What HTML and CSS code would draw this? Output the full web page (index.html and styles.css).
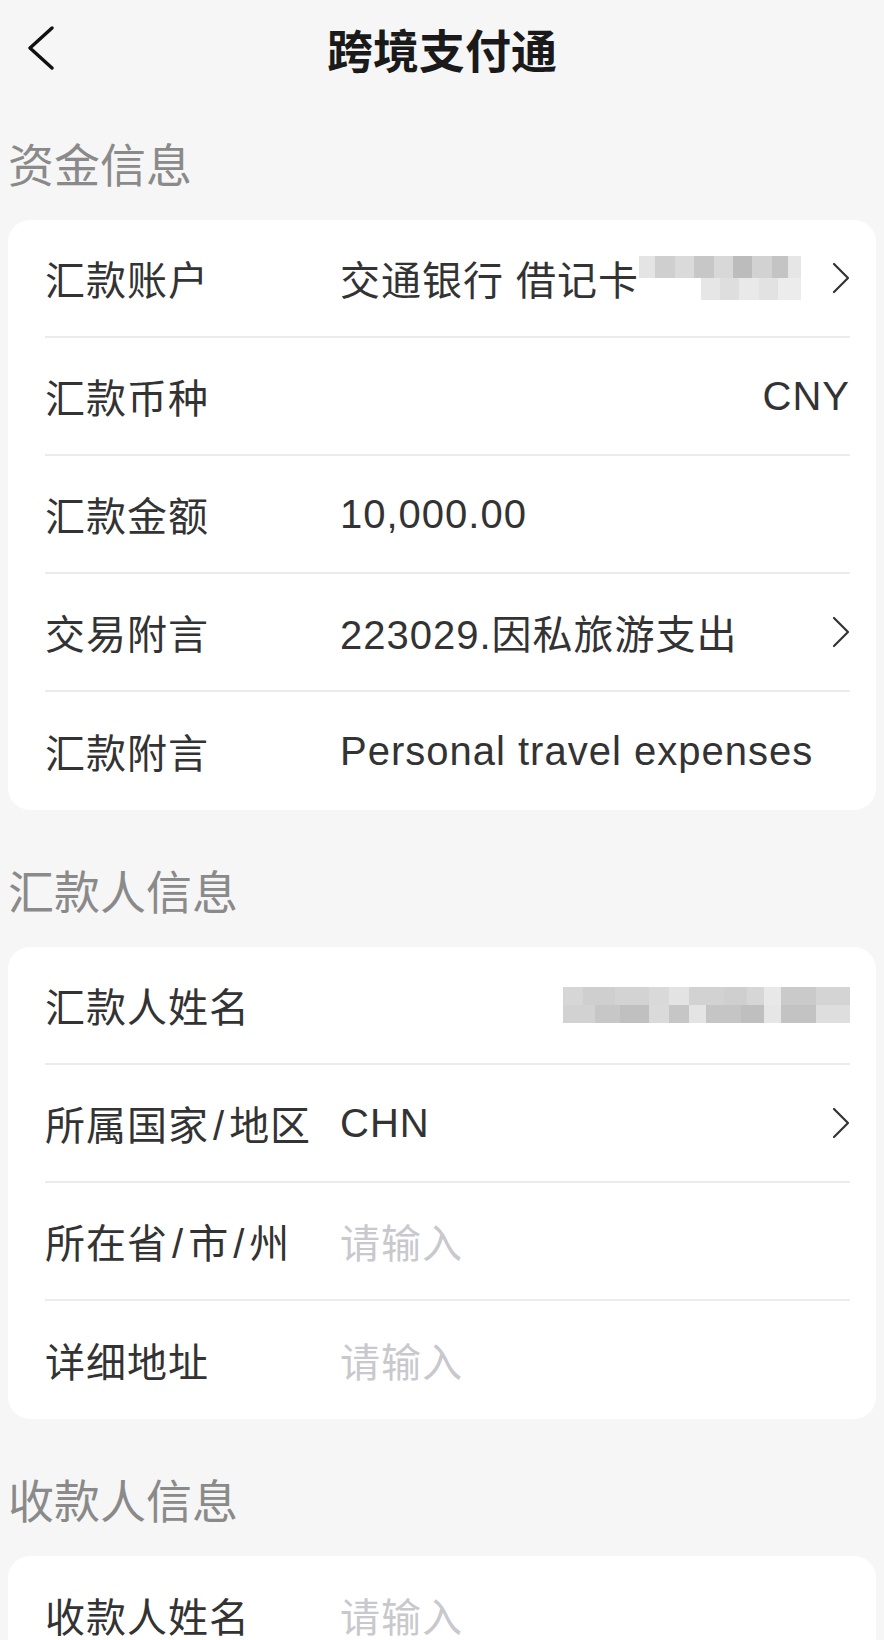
FILE: index.html
```html
<!DOCTYPE html>
<html lang="zh-CN">
<head>
  <meta charset="UTF-8">
  <title>跨境支付通</title>
  <link rel="stylesheet" href="styles.css">
</head>
<body>
  <nav class="topbar">
    <a href="#" class="back">
      <svg width="30" height="44" viewBox="0 0 30 44"><path d="M26 2 L4 22 L26 42" fill="none" stroke="#111" stroke-width="3.4" stroke-linecap="round" stroke-linejoin="round"/></svg>
    </a>
    <h1>跨境支付通</h1>
    <span></span>
  </nav>

  <main class="page">
    <h2 class="section-title">资金信息</h2>
    <div class="card">
      <div class="row">
        <span class="label">汇款账户</span>
        <span class="value">交通银行 借记卡<span class="mosaic mosaic-card"></span></span>
        <svg class="arrow" width="18" height="32" viewBox="0 0 18 32"><path d="M2 2 L16 16 L2 30" fill="none" stroke="#333" stroke-width="2.2" stroke-linecap="round" stroke-linejoin="round"/></svg>
      </div>
      <div class="row">
        <span class="label">汇款币种</span>
        <span class="value right">CNY</span>
      </div>
      <div class="row">
        <span class="label">汇款金额</span>
        <span class="value">10,000.00</span>
      </div>
      <div class="row">
        <span class="label">交易附言</span>
        <span class="value">223029.因私旅游支出</span>
        <svg class="arrow" width="18" height="32" viewBox="0 0 18 32"><path d="M2 2 L16 16 L2 30" fill="none" stroke="#333" stroke-width="2.2" stroke-linecap="round" stroke-linejoin="round"/></svg>
      </div>
      <div class="row">
        <span class="label">汇款附言</span>
        <span class="value">Personal travel expenses</span>
      </div>
    </div>

    <h2 class="section-title">汇款人信息</h2>
    <div class="card">
      <div class="row">
        <span class="label">汇款人姓名</span>
        <span class="value right"><span class="mosaic mosaic-name"></span></span>
      </div>
      <div class="row">
        <span class="label">所属国家<span class="slash">/</span>地区</span>
        <span class="value">CHN</span>
        <svg class="arrow" width="18" height="32" viewBox="0 0 18 32"><path d="M2 2 L16 16 L2 30" fill="none" stroke="#333" stroke-width="2.2" stroke-linecap="round" stroke-linejoin="round"/></svg>
      </div>
      <div class="row">
        <span class="label">所在省<span class="slash">/</span>市<span class="slash">/</span>州</span>
        <span class="value placeholder">请输入</span>
      </div>
      <div class="row">
        <span class="label">详细地址</span>
        <span class="value placeholder">请输入</span>
      </div>
    </div>

    <h2 class="section-title">收款人信息</h2>
    <div class="card">
      <div class="row">
        <span class="label">收款人姓名</span>
        <span class="value placeholder">请输入</span>
      </div>
    </div>
  </main>
</body>
</html>
```

FILE: styles.css
```css
body {
  background-color: #f6f6f6;
  font-family: "Liberation Sans", "Noto Sans CJK SC", sans-serif;
  color: #333;
  margin: 0;
}

.topbar {
  display: grid;
  grid-template-columns: 1fr auto 1fr;
  align-items: center;
  height: 96px;
}

.back {
  display: flex;
  align-items: center;
  padding-left: 26px;
}

.topbar h1 {
  margin: 0;
  font-family: "Noto Sans CJK SC", sans-serif;
  font-size: 46px;
  font-weight: 700;
  color: #1a1a1a;
  line-height: 50px;
}

.page {
  padding: 0 8px;
}

.section-title {
  margin: 0;
  padding: 56px 0 35px;
  font-family: "Noto Sans CJK SC", sans-serif;
  font-size: 46px;
  font-weight: 400;
  line-height: 46px;
  color: #8a8a8a;
}

.section-title:first-child {
  padding-top: 43px;
}

.card {
  background-color: white;
  border-radius: 22px;
  padding: 0 26px 0 37px;
}

.row {
  display: flex;
  align-items: center;
  height: 118px;
  box-sizing: border-box;
  border-bottom: 2px solid #ebebeb;
  font-size: 40px;
  letter-spacing: 1px;
}

.row:last-child {
  border-bottom: none;
}

.label {
  width: 295px;
  flex-shrink: 0;
  color: #333;
  white-space: nowrap;
}

.slash {
  margin: 0 4px;
}

.value {
  flex: 1;
  min-width: 0;
  display: flex;
  align-items: center;
  white-space: nowrap;
  color: #333;
}

.value.right {
  justify-content: flex-end;
}

.placeholder {
  color: #c8c8cd;
}

.arrow {
  flex-shrink: 0;
  margin-left: 24px;
}

.mosaic {
  display: inline-block;
  flex-shrink: 0;
}

.mosaic-card {
  width: 162px;
  height: 44px;
  background:
    linear-gradient(90deg, #e4e4e4 0 10%, #cfcfcf 10% 22%, #dadada 22% 34%, #c7c7c7 34% 46%, #d8d8d8 46% 58%, #bcbcbc 58% 70%, #d2d2d2 70% 82%, #c4c4c4 82% 92%, #e6e6e6 92% 100%) top / 100% 50% no-repeat,
    linear-gradient(90deg, transparent 0 38%, #e6e6e6 38% 50%, #dedede 50% 62%, #e9e9e9 62% 74%, #e2e2e2 74% 86%, #ececec 86% 100%) bottom / 100% 50% no-repeat;
}

.mosaic-name {
  width: 287px;
  height: 36px;
  background:
    linear-gradient(90deg, #d6d6d6 0 7%, #cfcfcf 7% 18%, #d3d3d3 18% 30%, #d9d9d9 30% 37%, #e3e3e3 37% 44%, #d2d2d2 44% 56%, #cfcfcf 56% 64%, #d6d6d6 64% 70%, #e8e8e8 70% 76%, #cacaca 76% 88%, #d4d4d4 88% 100%) top / 100% 50% no-repeat,
    linear-gradient(90deg, #d2d2d2 0 11%, #c7c7c7 11% 20%, #c0c0c0 20% 30%, #dadada 30% 37%, #c6c6c6 37% 44%, #e4e4e4 44% 50%, #c5c5c5 50% 62%, #bfbfbf 62% 70%, #e6e6e6 70% 76%, #c3c3c3 76% 88%, #dedede 88% 100%) bottom / 100% 50% no-repeat;
}
```
